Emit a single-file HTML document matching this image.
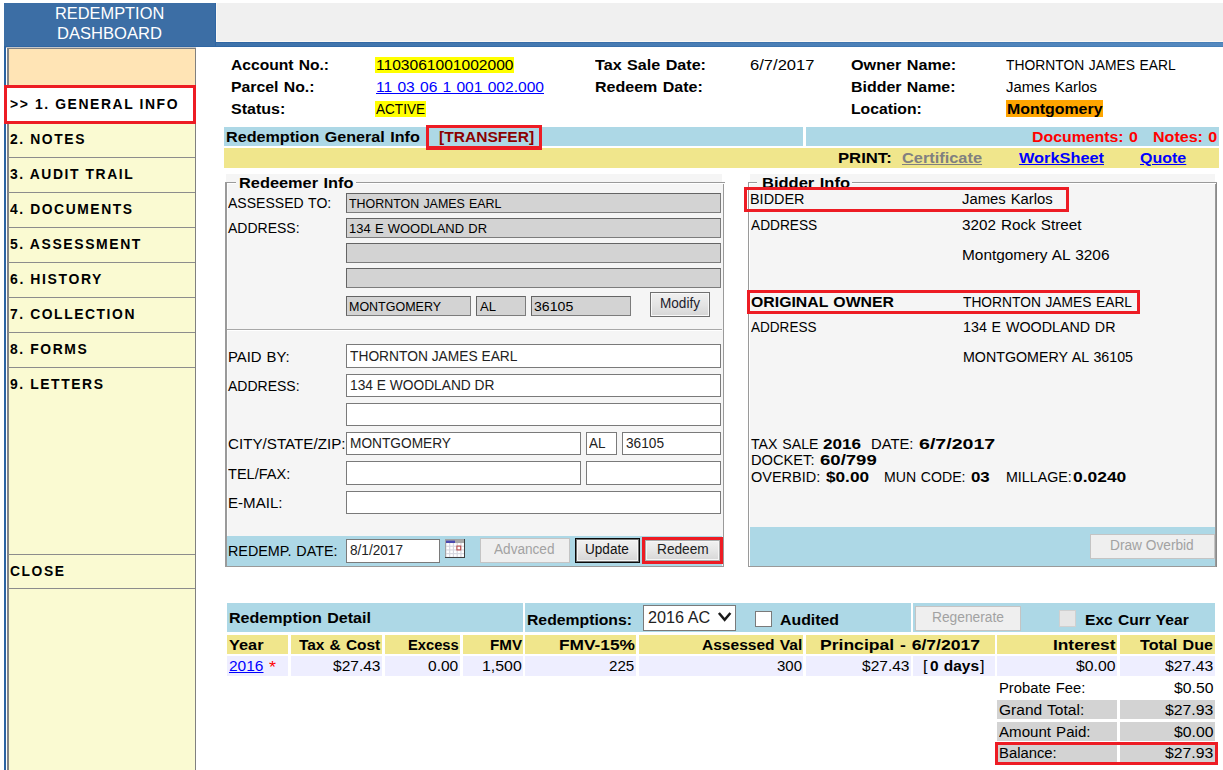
<!DOCTYPE html>
<html><head><meta charset="utf-8"><title>Redemption Dashboard</title>
<style>html,body{margin:0;padding:0;background:#fff}
body{width:1223px;height:770px;position:relative;overflow:hidden;font-family:'Liberation Sans',sans-serif;color:#000}
div,span.t,svg{position:absolute;box-sizing:border-box}
span.t{white-space:pre;line-height:20px;height:20px;transform-origin:0 0}
</style></head><body>
<div style="left:4px;top:3px;width:212px;height:44px;background:#3c6ea5;"></div>
<div style="left:216px;top:3px;width:1007px;height:39px;background:#f0f0f0;"></div>
<div style="left:216px;top:42px;width:1007px;height:5px;background:linear-gradient(90deg,#3e72aa 0%,#4a7eb5 50%,#5589bf 100%);"></div>
<div style="left:4px;top:47px;width:2px;height:723px;background:#2c64a2;"></div>
<div style="left:4px;top:46px;width:212px;height:1px;background:#2f66a3;"></div>
<div style="left:215px;top:3px;width:1px;height:43px;background:#2f66a3;"></div>
<div style="left:216px;top:42px;width:1007px;height:1px;background:linear-gradient(90deg,#2f66a3 0%,#3c72ac 50%,#4880b8 100%);"></div>
<div style="left:216px;top:46px;width:1007px;height:1px;background:linear-gradient(90deg,#2f66a3 0%,#3c72ac 50%,#4880b8 100%);"></div>
<div style="left:216px;top:3px;width:1px;height:39px;background:#fbf8f5;"></div>
<div style="left:216px;top:41px;width:1007px;height:1px;background:#fbf8f5;"></div>
<span class="t" style="font-size:17px;color:#fff;left:54.5px;top:4px;transform:scaleX(0.9639);">REDEMPTION</span>
<span class="t" style="font-size:17px;color:#fff;left:56.5px;top:24px;transform:scaleX(0.9750);">DASHBOARD</span>
<div style="left:6px;top:47px;width:190px;height:1px;background:#c8c8c8;"></div>
<div style="left:7px;top:48px;width:189px;height:722px;background:#fafad2;border-left:2px solid #858585;border-right:1px solid #808080;border-top:1px solid #808080;"></div>
<div style="left:9px;top:49px;width:186px;height:37px;background:#ffe4b5;"></div>
<div style="left:8px;top:157px;width:187px;height:1px;background:#8c8c8c;"></div>
<div style="left:8px;top:192px;width:187px;height:1px;background:#8c8c8c;"></div>
<div style="left:8px;top:227px;width:187px;height:1px;background:#8c8c8c;"></div>
<div style="left:8px;top:262px;width:187px;height:1px;background:#8c8c8c;"></div>
<div style="left:8px;top:297px;width:187px;height:1px;background:#8c8c8c;"></div>
<div style="left:8px;top:332px;width:187px;height:1px;background:#8c8c8c;"></div>
<div style="left:8px;top:367px;width:187px;height:1px;background:#8c8c8c;"></div>
<div style="left:8px;top:554px;width:187px;height:1px;background:#8c8c8c;"></div>
<div style="left:8px;top:588px;width:187px;height:1px;background:#8c8c8c;"></div>
<div style="left:4px;top:85px;width:192px;height:39px;background:#fff;border:3px solid #ed1c24;"></div>
<span class="t" style="font-size:14px;font-weight:bold;letter-spacing:1.6px;left:10px;top:94px;transform:scaleX(0.9938);">&gt;&gt; 1. GENERAL INFO</span>
<span class="t" style="font-size:14px;font-weight:bold;letter-spacing:1.6px;left:10px;top:129px;transform:scaleX(0.9934);">2. NOTES</span>
<span class="t" style="font-size:14px;font-weight:bold;letter-spacing:1.6px;left:10px;top:164px;transform:scaleX(0.9917);">3. AUDIT TRAIL</span>
<span class="t" style="font-size:14px;font-weight:bold;letter-spacing:1.6px;left:10px;top:199px;transform:scaleX(0.9887);">4. DOCUMENTS</span>
<span class="t" style="font-size:14px;font-weight:bold;letter-spacing:1.6px;left:10px;top:234px;transform:scaleX(0.9976);">5. ASSESSMENT</span>
<span class="t" style="font-size:14px;font-weight:bold;letter-spacing:1.6px;left:10px;top:269px;">6. HISTORY</span>
<span class="t" style="font-size:14px;font-weight:bold;letter-spacing:1.6px;left:10px;top:304px;transform:scaleX(0.9892);">7. COLLECTION</span>
<span class="t" style="font-size:14px;font-weight:bold;letter-spacing:1.6px;left:10px;top:339px;transform:scaleX(0.9920);">8. FORMS</span>
<span class="t" style="font-size:14px;font-weight:bold;letter-spacing:1.6px;left:10px;top:374px;transform:scaleX(0.9919);">9. LETTERS</span>
<span class="t" style="font-size:14px;font-weight:bold;letter-spacing:1.6px;left:10px;top:561px;transform:scaleX(0.9884);">CLOSE</span>
<span class="t" style="font-size:14px;font-weight:bold;word-spacing:0.8px;left:231px;top:55px;transform:scaleX(1.1148);">Account No.:</span>
<span class="t" style="font-size:14px;font-weight:bold;word-spacing:0.8px;left:231px;top:77px;transform:scaleX(1.1291);">Parcel No.:</span>
<span class="t" style="font-size:14px;font-weight:bold;left:231px;top:99px;transform:scaleX(1.1443);">Status:</span>
<div style="left:375px;top:57px;width:139px;height:16px;background:#ffff00;"></div>
<span class="t" style="font-size:14px;left:376px;top:55px;transform:scaleX(1.1129);">1103061001002000</span>
<span class="t" style="font-size:14px;color:#0000ff;text-decoration:underline;word-spacing:0.8px;left:375.5px;top:77px;transform:scaleX(1.1134);">11 03 06 1 001 002.000</span>
<div style="left:375px;top:101px;width:51px;height:16px;background:#ffff00;"></div>
<span class="t" style="font-size:14px;left:376px;top:99px;transform:scaleX(0.9688);">ACTIVE</span>
<span class="t" style="font-size:14px;font-weight:bold;word-spacing:0.8px;left:595px;top:55px;transform:scaleX(1.1529);">Tax Sale Date:</span>
<span class="t" style="font-size:14px;font-weight:bold;word-spacing:0.8px;left:595px;top:77px;transform:scaleX(1.1442);">Redeem Date:</span>
<span class="t" style="font-size:14px;left:750px;top:55px;transform:scaleX(1.1835);">6/7/2017</span>
<span class="t" style="font-size:14px;font-weight:bold;word-spacing:0.8px;left:850.5px;top:55px;transform:scaleX(1.1558);">Owner Name:</span>
<span class="t" style="font-size:14px;font-weight:bold;word-spacing:0.8px;left:850.5px;top:77px;transform:scaleX(1.1380);">Bidder Name:</span>
<span class="t" style="font-size:14px;font-weight:bold;left:850.5px;top:99px;transform:scaleX(1.1230);">Location:</span>
<span class="t" style="font-size:14px;word-spacing:0.8px;left:1006px;top:55px;transform:scaleX(0.9886);">THORNTON JAMES EARL</span>
<span class="t" style="font-size:14px;word-spacing:0.8px;left:1006px;top:77px;transform:scaleX(1.0630);">James Karlos</span>
<div style="left:1006px;top:100px;width:97px;height:17px;background:#ffa500;"></div>
<span class="t" style="font-size:14px;font-weight:bold;left:1006.75px;top:99px;transform:scaleX(1.1369);">Montgomery</span>
<div style="left:224px;top:127px;width:579px;height:19px;background:#add8e6;"></div>
<div style="left:806px;top:127px;width:413px;height:19px;background:#add8e6;"></div>
<div style="left:224px;top:148px;width:995px;height:20px;background:#f0e68c;"></div>
<span class="t" style="font-size:14px;font-weight:bold;word-spacing:0.8px;left:225.5px;top:127px;transform:scaleX(1.1531);">Redemption General Info</span>
<div style="left:426px;top:125px;width:116px;height:25px;border:3px solid #ed1c24;border-bottom-width:4px;"></div>
<span class="t" style="font-size:14px;font-weight:bold;color:#8b0000;left:438.8px;top:127px;transform:scaleX(1.1117);">[TRANSFER]</span>
<span class="t" style="font-size:14px;font-weight:bold;color:#ff0000;word-spacing:0.8px;left:1032px;top:127px;transform:scaleX(1.1325);">Documents: 0</span>
<span class="t" style="font-size:14px;font-weight:bold;color:#ff0000;word-spacing:0.8px;left:1152.75px;top:127px;transform:scaleX(1.1464);">Notes: 0</span>
<span class="t" style="font-size:14px;font-weight:bold;left:838.25px;top:148px;transform:scaleX(1.1911);">PRINT:</span>
<span class="t" style="font-size:14px;font-weight:bold;color:#808080;text-decoration:underline;left:902px;top:148px;transform:scaleX(1.1684);">Certificate</span>
<span class="t" style="font-size:14px;font-weight:bold;color:#0000ff;text-decoration:underline;left:1019px;top:148px;transform:scaleX(1.1664);">WorkSheet</span>
<span class="t" style="font-size:14px;font-weight:bold;color:#0000ff;text-decoration:underline;left:1139.5px;top:148px;transform:scaleX(1.1433);">Quote</span>
<div style="left:226px;top:174px;width:496px;height:9px;background:#f5f5f5;"></div>
<div style="left:226px;top:183px;width:497px;height:383px;background:#f5f5f5;"></div>
<div style="left:225px;top:182px;width:500px;height:1px;background:#9a9a9a;"></div>
<div style="left:225px;top:182px;width:1px;height:386px;background:#9a9a9a;"></div>
<div style="left:226px;top:183px;width:497px;height:1px;background:#fff;"></div>
<div style="left:226px;top:183px;width:1px;height:383px;background:#fff;"></div>
<div style="left:723px;top:184px;width:1px;height:383px;background:#9a9a9a;"></div>
<div style="left:226px;top:566px;width:498px;height:1px;background:#9a9a9a;"></div>
<div style="left:724px;top:183px;width:1px;height:385px;background:#fff;"></div>
<div style="left:225px;top:567px;width:500px;height:1px;background:#fff;"></div>
<div style="left:226px;top:183px;width:1px;height:383px;background:#9a9a9a;"></div>
<div style="left:227px;top:184px;width:1px;height:382px;background:#fcfcfc;"></div>
<div style="left:236px;top:174px;width:120px;height:18px;background:#f5f5f5;"></div>
<span class="t" style="font-size:14px;font-weight:bold;word-spacing:0.8px;left:238.75px;top:173px;transform:scaleX(1.1676);">Redeemer Info</span>
<span class="t" style="font-size:14px;word-spacing:0.8px;left:228px;top:193px;transform:scaleX(1.0024);">ASSESSED TO:</span>
<span class="t" style="font-size:14px;left:228px;top:218px;">ADDRESS:</span>
<div style="left:346px;top:193px;width:375px;height:20px;background:#d3d3d3;border:1px solid #646464;border-right-color:#7c7c7c;border-bottom-color:#7c7c7c;"></div>
<div style="left:346px;top:218px;width:375px;height:20px;background:#d3d3d3;border:1px solid #646464;border-right-color:#7c7c7c;border-bottom-color:#7c7c7c;"></div>
<div style="left:346px;top:243px;width:375px;height:20px;background:#d3d3d3;border:1px solid #646464;border-right-color:#7c7c7c;border-bottom-color:#7c7c7c;"></div>
<div style="left:346px;top:268px;width:375px;height:20px;background:#d3d3d3;border:1px solid #646464;border-right-color:#7c7c7c;border-bottom-color:#7c7c7c;"></div>
<div style="left:346px;top:296px;width:125px;height:20px;background:#d3d3d3;border:1px solid #646464;border-right-color:#7c7c7c;border-bottom-color:#7c7c7c;"></div>
<div style="left:476px;top:296px;width:50px;height:20px;background:#d3d3d3;border:1px solid #646464;border-right-color:#7c7c7c;border-bottom-color:#7c7c7c;"></div>
<div style="left:531px;top:296px;width:100px;height:20px;background:#d3d3d3;border:1px solid #646464;border-right-color:#7c7c7c;border-bottom-color:#7c7c7c;"></div>
<span class="t" style="font-size:13px;word-spacing:0.7px;left:349px;top:194px;transform:scaleX(0.9570);">THORNTON JAMES EARL</span>
<span class="t" style="font-size:13px;word-spacing:0.7px;left:349px;top:219px;transform:scaleX(0.9954);">134 E WOODLAND DR</span>
<span class="t" style="font-size:13px;left:348.75px;top:297px;transform:scaleX(0.9601);">MONTGOMERY</span>
<span class="t" style="font-size:13px;left:479.5px;top:297px;transform:scaleX(1.0059);">AL</span>
<span class="t" style="font-size:13px;left:534.25px;top:297px;transform:scaleX(1.0856);">36105</span>
<div style="left:650px;top:292px;width:60px;height:25px;border:1px solid #707070;box-shadow:inset 0 0 0 1px #f8f8f8;background:linear-gradient(#f0f0f0,#e5e5e5 50%,#d6d6d6);"></div>
<span class="t" style="font-size:14px;color:#1c1c2c;left:659.5px;top:293px;transform:scaleX(0.9701);">Modify</span>
<div style="left:227px;top:329px;width:495px;height:1px;background:#a8a8a8;"></div>
<div style="left:227px;top:330px;width:495px;height:1px;background:#fff;"></div>
<span class="t" style="font-size:14px;word-spacing:0.8px;left:228px;top:347px;transform:scaleX(1.0624);">PAID BY:</span>
<span class="t" style="font-size:14px;left:228px;top:376px;">ADDRESS:</span>
<span class="t" style="font-size:14px;left:228px;top:434px;transform:scaleX(1.0840);">CITY/STATE/ZIP:</span>
<span class="t" style="font-size:14px;left:228px;top:464px;transform:scaleX(1.0389);">TEL/FAX:</span>
<span class="t" style="font-size:14px;left:228px;top:493px;transform:scaleX(1.0775);">E-MAIL:</span>
<div style="left:346px;top:344px;width:375px;height:24px;background:#fff;border:1px solid #7a7a7a;"></div>
<div style="left:346px;top:374px;width:375px;height:23px;background:#fff;border:1px solid #7a7a7a;"></div>
<div style="left:346px;top:403px;width:375px;height:23px;background:#fff;border:1px solid #7a7a7a;"></div>
<div style="left:346px;top:432px;width:235px;height:23px;background:#fff;border:1px solid #7a7a7a;"></div>
<div style="left:586px;top:432px;width:31px;height:23px;background:#fff;border:1px solid #7a7a7a;"></div>
<div style="left:622px;top:432px;width:99px;height:23px;background:#fff;border:1px solid #7a7a7a;"></div>
<div style="left:346px;top:461px;width:235px;height:24px;background:#fff;border:1px solid #7a7a7a;"></div>
<div style="left:586px;top:461px;width:135px;height:24px;background:#fff;border:1px solid #7a7a7a;"></div>
<div style="left:346px;top:491px;width:375px;height:23px;background:#fff;border:1px solid #7a7a7a;"></div>
<span class="t" style="font-size:14px;color:#222;left:350px;top:346px;transform:scaleX(0.9847);">THORNTON JAMES EARL</span>
<span class="t" style="font-size:14px;color:#222;left:350px;top:375px;transform:scaleX(0.9827);">134 E WOODLAND DR</span>
<span class="t" style="font-size:14px;color:#222;left:350px;top:433px;transform:scaleX(0.9787);">MONTGOMERY</span>
<span class="t" style="font-size:14px;color:#222;left:589.25px;top:433px;transform:scaleX(0.9635);">AL</span>
<span class="t" style="font-size:14px;color:#222;left:625.75px;top:433px;transform:scaleX(0.9759);">36105</span>
<div style="left:227px;top:536px;width:495px;height:30px;background:#add8e6;"></div>
<span class="t" style="font-size:14px;word-spacing:0.8px;left:228px;top:541px;transform:scaleX(1.0246);">REDEMP. DATE:</span>
<div style="left:346px;top:539px;width:94px;height:24px;background:#fff;border:1px solid #7a7a7a;"></div>
<span class="t" style="font-size:14px;color:#222;left:350px;top:540px;transform:scaleX(0.9725);">8/1/2017</span>
<svg style="left:445px;top:539px" width="20" height="19" viewBox="0 0 20 19">
<rect x="0" y="0" width="20" height="19" fill="#a2a2a2"/>
<rect x="1" y="1" width="18" height="17" fill="#d6d6de"/>
<rect x="1" y="1" width="9" height="3" fill="#a8a8a8"/><rect x="1" y="1.6" width="9" height="2.4" fill="#4a4ab0"/><rect x="10" y="1" width="9" height="3" fill="#a8a8a8"/>
<g fill="#fff"><rect x="1.50" y="4.10" width="2.6" height="2.6"/><rect x="5.25" y="4.10" width="2.6" height="2.6"/><rect x="9.00" y="4.10" width="2.6" height="2.6"/><rect x="12.75" y="4.10" width="2.6" height="2.6"/><rect x="16.50" y="4.10" width="2.6" height="2.6"/><rect x="1.50" y="7.80" width="2.6" height="2.6"/><rect x="5.25" y="7.80" width="2.6" height="2.6"/><rect x="9.00" y="7.80" width="2.6" height="2.6"/><rect x="12.75" y="7.80" width="2.6" height="2.6"/><rect x="16.50" y="7.80" width="2.6" height="2.6"/><rect x="1.50" y="11.50" width="2.6" height="2.6"/><rect x="5.25" y="11.50" width="2.6" height="2.6"/><rect x="9.00" y="11.50" width="2.6" height="2.6"/><rect x="12.75" y="11.50" width="2.6" height="2.6"/><rect x="16.50" y="11.50" width="2.6" height="2.6"/><rect x="1.50" y="15.20" width="2.6" height="2.6"/><rect x="5.25" y="15.20" width="2.6" height="2.6"/><rect x="9.00" y="15.20" width="2.6" height="2.6"/><rect x="12.75" y="15.20" width="2.6" height="2.6"/><rect x="16.50" y="15.20" width="2.6" height="2.6"/></g>
<rect x="11.9" y="7.1" width="3.8" height="3.8" fill="#fff" stroke="#b84a4a" stroke-width="1.1"/>
<rect x="19" y="0" width="1" height="19" fill="#404040"/><rect x="0" y="18" width="20" height="1" fill="#404040"/>
</svg>
<div style="left:480px;top:538px;width:90px;height:25px;border:1px solid #c4c4c4;background:#efefef;"></div>
<span class="t" style="font-size:14px;color:#a2a2a2;left:493.75px;top:539px;transform:scaleX(0.9714);">Advanced</span>
<div style="left:575px;top:538px;width:65px;height:25px;border:1px solid #0a0a0a;box-shadow:inset 0 0 0 1px #747474,inset 0 0 0 2px #f6f6f6;background:linear-gradient(#f2f2f2,#e6e6e6 50%,#d4d4d4);"></div>
<span class="t" style="font-size:14px;color:#111;left:585px;top:539px;transform:scaleX(0.9689);">Update</span>
<div style="left:642px;top:537px;width:81px;height:27px;border:3px solid #ed1c24;box-shadow:inset 0 0 0 1px #acacac,inset 0 0 0 2px #f6f6f6;background:linear-gradient(#f2f2f2,#e6e6e6 50%,#d6d6d6);"></div>
<span class="t" style="font-size:14px;color:#222;left:657px;top:539px;transform:scaleX(0.9779);">Redeem</span>
<div style="left:750px;top:174px;width:465px;height:9px;background:#f5f5f5;"></div>
<div style="left:749px;top:183px;width:466px;height:383px;background:#f5f5f5;"></div>
<div style="left:748px;top:182px;width:469px;height:1px;background:#9a9a9a;"></div>
<div style="left:748px;top:182px;width:1px;height:386px;background:#9a9a9a;"></div>
<div style="left:749px;top:183px;width:466px;height:1px;background:#fff;"></div>
<div style="left:749px;top:183px;width:1px;height:383px;background:#fff;"></div>
<div style="left:1215px;top:184px;width:1px;height:383px;background:#9a9a9a;"></div>
<div style="left:749px;top:566px;width:467px;height:1px;background:#9a9a9a;"></div>
<div style="left:1216px;top:183px;width:1px;height:385px;background:#fff;"></div>
<div style="left:748px;top:567px;width:469px;height:1px;background:#fff;"></div>
<div style="left:1216px;top:183px;width:1px;height:384px;background:#8a8a8a;"></div>
<div style="left:757px;top:174px;width:95px;height:18px;background:#f5f5f5;"></div>
<span class="t" style="font-size:14px;font-weight:bold;word-spacing:0.8px;left:761.75px;top:173px;transform:scaleX(1.1782);">Bidder Info</span>
<div style="left:744px;top:187px;width:325px;height:25px;border:3px solid #ed1c24;"></div>
<span class="t" style="font-size:14px;left:750px;top:189px;transform:scaleX(1.0301);">BIDDER</span>
<span class="t" style="font-size:14px;word-spacing:0.8px;left:962px;top:189px;transform:scaleX(1.0600);">James Karlos</span>
<span class="t" style="font-size:14px;left:750.5px;top:215px;transform:scaleX(0.9788);">ADDRESS</span>
<span class="t" style="font-size:14px;word-spacing:0.8px;left:962px;top:215px;transform:scaleX(1.0885);">3202 Rock Street</span>
<span class="t" style="font-size:14px;word-spacing:0.8px;left:962px;top:245px;transform:scaleX(1.0993);">Montgomery AL 3206</span>
<div style="left:747px;top:290px;width:393px;height:24px;border:3px solid #ed1c24;"></div>
<span class="t" style="font-size:14px;font-weight:bold;word-spacing:0.8px;left:750.5px;top:292px;transform:scaleX(1.1300);">ORIGINAL OWNER</span>
<span class="t" style="font-size:14px;word-spacing:0.8px;left:962.5px;top:292px;transform:scaleX(0.9843);">THORNTON JAMES EARL</span>
<span class="t" style="font-size:14px;left:750.5px;top:317px;transform:scaleX(0.9677);">ADDRESS</span>
<span class="t" style="font-size:14px;word-spacing:0.8px;left:962.5px;top:317px;transform:scaleX(1.0205);">134 E WOODLAND DR</span>
<span class="t" style="font-size:14px;word-spacing:0.8px;left:962.5px;top:347px;transform:scaleX(1.0175);">MONTGOMERY AL 36105</span>
<span class="t" style="font-size:14px;word-spacing:0.8px;left:750.5px;top:434px;transform:scaleX(1.0122);">TAX SALE</span>
<span class="t" style="font-size:14px;font-weight:bold;left:822.5px;top:434px;transform:scaleX(1.2197);">2016</span>
<span class="t" style="font-size:14px;left:871.25px;top:434px;transform:scaleX(1.0571);">DATE:</span>
<span class="t" style="font-size:14px;font-weight:bold;left:919.25px;top:434px;transform:scaleX(1.3991);">6/7/2017</span>
<span class="t" style="font-size:14px;left:750.5px;top:450px;transform:scaleX(1.0463);">DOCKET:</span>
<span class="t" style="font-size:14px;font-weight:bold;left:819.5px;top:450px;transform:scaleX(1.3251);">60/799</span>
<span class="t" style="font-size:14px;left:750.5px;top:467px;transform:scaleX(1.0350);">OVERBID:</span>
<span class="t" style="font-size:14px;font-weight:bold;left:825.75px;top:467px;transform:scaleX(1.2269);">$0.00</span>
<span class="t" style="font-size:14px;word-spacing:0.8px;left:884.25px;top:467px;transform:scaleX(1.0071);">MUN CODE:</span>
<span class="t" style="font-size:14px;font-weight:bold;left:971.25px;top:467px;transform:scaleX(1.2036);">03</span>
<span class="t" style="font-size:14px;left:1005.75px;top:467px;transform:scaleX(1.0179);">MILLAGE:</span>
<span class="t" style="font-size:14px;font-weight:bold;left:1073.25px;top:467px;transform:scaleX(1.2433);">0.0240</span>
<div style="left:750px;top:527px;width:465px;height:39px;background:#add8e6;"></div>
<div style="left:1090px;top:534px;width:125px;height:25px;border:1px solid #c4c4c4;background:#efefef;"></div>
<span class="t" style="font-size:14px;color:#a2a2a2;left:1110px;top:535px;transform:scaleX(0.9785);">Draw Overbid</span>
<div style="left:227px;top:603px;width:296px;height:29px;background:#add8e6;"></div>
<div style="left:525px;top:603px;width:386px;height:29px;background:#add8e6;"></div>
<div style="left:913px;top:603px;width:302px;height:29px;background:#add8e6;"></div>
<span class="t" style="font-size:14px;font-weight:bold;word-spacing:0.8px;left:229.25px;top:608px;transform:scaleX(1.1478);">Redemption Detail</span>
<span class="t" style="font-size:14px;font-weight:bold;left:527px;top:610px;transform:scaleX(1.1249);">Redemptions:</span>
<div style="left:643px;top:605px;width:93px;height:26px;background:#fff;border:1px solid #7a7a7a;"></div>
<span class="t" style="font-size:16px;color:#222;left:648.4px;top:608px;transform:scaleX(1.0132);">2016 AC</span>
<svg style="left:716px;top:611px" width="18" height="13" viewBox="0 0 18 13"><path d="M2.9 2 L8.65 8.9 L14.4 2" fill="none" stroke="#1a1a1a" stroke-width="2.5"/></svg>
<div style="left:755px;top:611px;width:17px;height:16px;background:#fff;border:1px solid #7a7a7a;"></div>
<span class="t" style="font-size:14px;font-weight:bold;left:779.75px;top:610px;transform:scaleX(1.1322);">Audited</span>
<div style="left:915px;top:605.5px;width:106px;height:25.0px;border:1px solid #c4c4c4;background:#efefef;"></div>
<span class="t" style="font-size:14px;color:#a2a2a2;left:932px;top:607px;transform:scaleX(0.9840);">Regenerate</span>
<div style="left:1059px;top:610px;width:17px;height:17px;background:#e6e6e6;border:1px solid #d0d0d0;"></div>
<span class="t" style="font-size:14px;font-weight:bold;word-spacing:0.8px;left:1084.5px;top:610px;transform:scaleX(1.1133);">Exc Curr Year</span>
<div style="left:227px;top:635px;width:61px;height:19px;background:#f0e68c;"></div>
<div style="left:291px;top:635px;width:91px;height:19px;background:#f0e68c;"></div>
<div style="left:385px;top:635px;width:75px;height:19px;background:#f0e68c;"></div>
<div style="left:463px;top:635px;width:60px;height:19px;background:#f0e68c;"></div>
<div style="left:525px;top:635px;width:111px;height:19px;background:#f0e68c;"></div>
<div style="left:639px;top:635px;width:164px;height:19px;background:#f0e68c;"></div>
<div style="left:806px;top:635px;width:188.5px;height:19px;background:#f0e68c;"></div>
<div style="left:997px;top:635px;width:120px;height:19px;background:#f0e68c;"></div>
<div style="left:1119.5px;top:635px;width:95.5px;height:19px;background:#f0e68c;"></div>
<div style="left:227px;top:656px;width:61px;height:20px;background:#eeeeff;"></div>
<div style="left:291px;top:656px;width:91px;height:20px;background:#eeeeff;"></div>
<div style="left:385px;top:656px;width:75px;height:20px;background:#eeeeff;"></div>
<div style="left:463px;top:656px;width:60px;height:20px;background:#eeeeff;"></div>
<div style="left:525px;top:656px;width:111px;height:20px;background:#eeeeff;"></div>
<div style="left:639px;top:656px;width:164px;height:20px;background:#eeeeff;"></div>
<div style="left:806px;top:656px;width:105px;height:20px;background:#eeeeff;"></div>
<div style="left:913px;top:656px;width:81.5px;height:20px;background:#eeeeff;"></div>
<div style="left:997px;top:656px;width:120px;height:20px;background:#eeeeff;"></div>
<div style="left:1119.5px;top:656px;width:95.5px;height:20px;background:#eeeeff;"></div>
<span class="t" style="font-size:14px;font-weight:bold;left:229.25px;top:635px;transform:scaleX(1.1658);">Year</span>
<span class="t" style="font-size:14px;font-weight:bold;word-spacing:0.8px;left:298.75px;top:635px;transform:scaleX(1.1026);">Tax &amp; Cost</span>
<span class="t" style="font-size:14px;font-weight:bold;left:407.5px;top:635px;transform:scaleX(1.0511);">Excess</span>
<span class="t" style="font-size:14px;font-weight:bold;left:489.5px;top:635px;transform:scaleX(1.0825);">FMV</span>
<span class="t" style="font-size:14px;font-weight:bold;left:558.75px;top:635px;transform:scaleX(1.2364);">FMV-15%</span>
<span class="t" style="font-size:14px;font-weight:bold;word-spacing:0.8px;left:701.5px;top:635px;transform:scaleX(1.1100);">Assessed Val</span>
<span class="t" style="font-size:14px;font-weight:bold;word-spacing:0.8px;left:820px;top:635px;transform:scaleX(1.2532);">Principal - 6/7/2017</span>
<span class="t" style="font-size:14px;font-weight:bold;left:1053.25px;top:635px;transform:scaleX(1.2357);">Interest</span>
<span class="t" style="font-size:14px;font-weight:bold;word-spacing:0.8px;left:1140.25px;top:635px;transform:scaleX(1.1488);">Total Due</span>
<span class="t" style="font-size:14px;color:#0000ff;text-decoration:underline;left:229.25px;top:656px;transform:scaleX(1.1073);">2016</span>
<span class="t" style="font-size:16px;color:#ff0000;left:269.25px;top:658px;transform:scaleX(1.1228);">*</span>
<span class="t" style="font-size:14px;left:332.5px;top:656px;transform:scaleX(1.1091);">$27.43</span>
<span class="t" style="font-size:14px;left:428px;top:656px;transform:scaleX(1.1101);">0.00</span>
<span class="t" style="font-size:14px;left:481.5px;top:656px;transform:scaleX(1.1342);">1,500</span>
<span class="t" style="font-size:14px;left:609.25px;top:656px;transform:scaleX(1.0809);">225</span>
<span class="t" style="font-size:14px;left:776.75px;top:656px;transform:scaleX(1.0702);">300</span>
<span class="t" style="font-size:14px;left:861.75px;top:656px;transform:scaleX(1.1091);">$27.43</span>
<span class="t" style="font-size:14px;left:923.25px;top:656px;transform:scaleX(1.1566);">[</span>
<span class="t" style="font-size:14px;font-weight:bold;word-spacing:0.8px;left:929.5px;top:656px;transform:scaleX(1.1038);">0 days</span>
<span class="t" style="font-size:14px;left:980px;top:656px;transform:scaleX(1.1566);">]</span>
<span class="t" style="font-size:14px;left:1076.25px;top:656px;transform:scaleX(1.1271);">$0.00</span>
<span class="t" style="font-size:14px;left:1165px;top:656px;transform:scaleX(1.1266);">$27.43</span>
<span class="t" style="font-size:14px;word-spacing:0.8px;left:998.75px;top:678px;transform:scaleX(1.0550);">Probate Fee:</span>
<span class="t" style="font-size:14px;left:1173.75px;top:678px;transform:scaleX(1.1271);">$0.50</span>
<div style="left:997px;top:700px;width:120px;height:19px;background:#d3d3d3;"></div>
<div style="left:1119.5px;top:700px;width:95.5px;height:19px;background:#d3d3d3;"></div>
<div style="left:997px;top:722px;width:120px;height:19px;background:#d3d3d3;"></div>
<div style="left:1119.5px;top:722px;width:95.5px;height:19px;background:#d3d3d3;"></div>
<div style="left:997px;top:745px;width:120px;height:17px;background:#d3d3d3;"></div>
<div style="left:1119.5px;top:745px;width:95.5px;height:17px;background:#d3d3d3;"></div>
<span class="t" style="font-size:14px;word-spacing:0.8px;left:998.75px;top:700px;transform:scaleX(1.1098);">Grand Total:</span>
<span class="t" style="font-size:14px;left:1165px;top:700px;transform:scaleX(1.1266);">$27.93</span>
<span class="t" style="font-size:14px;word-spacing:0.8px;left:998.75px;top:722px;transform:scaleX(1.0783);">Amount Paid:</span>
<span class="t" style="font-size:14px;left:1173.75px;top:722px;transform:scaleX(1.1271);">$0.00</span>
<div style="left:995px;top:742px;width:223px;height:23px;border:3px solid #ed1c24;"></div>
<span class="t" style="font-size:14px;left:998.75px;top:743px;transform:scaleX(1.0599);">Balance:</span>
<span class="t" style="font-size:14px;left:1165px;top:743px;transform:scaleX(1.1266);">$27.93</span>
</body></html>
